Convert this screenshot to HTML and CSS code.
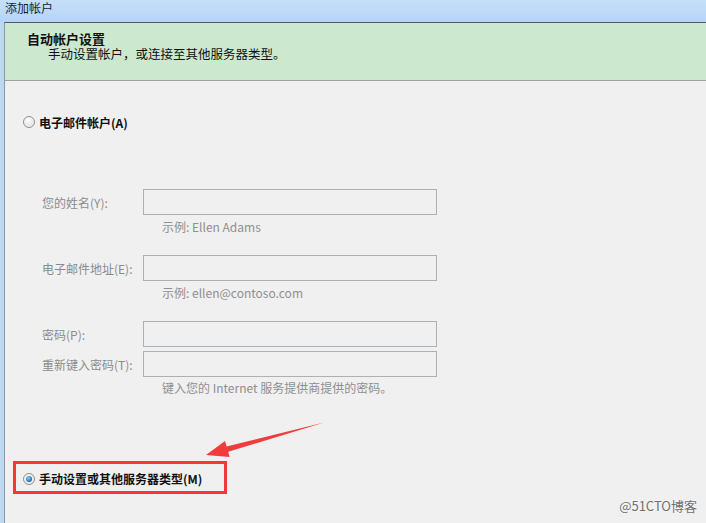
FILE: index.html
```html
<!DOCTYPE html>
<html lang="zh-CN">
<head>
    <meta charset="UTF-8">
    <title>添加帐户</title>
    <link rel="stylesheet" href="styles.css">
</head>
<body>
    <div class="window">
        <div class="titlebar">添加帐户</div>
        <div class="frame">
            <div class="panel">
                <div class="header">
                    <div class="header-title">自动帐户设置</div>
                    <div class="header-sub">手动设置帐户，或连接至其他服务器类型。</div>
                </div>
                <div class="content">
                    <div class="option"><span class="radio"></span>电子邮件帐户(A)</div>

                    <div class="form">
                        <div class="field"><span class="label">您的姓名(Y):</span><span class="input"></span></div>
                        <div class="hint">示例: Ellen Adams</div>
                        <div class="field gap"><span class="label">电子邮件地址(E):</span><span class="input"></span></div>
                        <div class="hint">示例: ellen@contoso.com</div>
                        <div class="field gap"><span class="label">密码(P):</span><span class="input"></span></div>
                        <div class="field tight"><span class="label">重新键入密码(T):</span><span class="input"></span></div>
                        <div class="hint note">键入您的 Internet 服务提供商提供的密码。</div>
                    </div>

                    <div class="option marked"><span class="radio checked"></span>手动设置或其他服务器类型(M)</div>
                </div>
            </div>
        </div>

        <!-- annotation arrow -->
        <svg class="arrow" width="706" height="523" viewBox="0 0 706 523">
            <polygon points="206,455 225,441 226.6,446.6 324,422.6 228.2,451.8 229.6,457" fill="#f23b3b"/>
        </svg>
        <div class="watermark">@51CTO博客</div>
    </div>
</body>
</html>
```

FILE: styles.css
```css
body {
    margin: 0;
    font-family: "Noto Sans CJK SC", "Liberation Sans", sans-serif;
    font-size: 12px;
}

.window {
    position: relative;
    width: 706px;
    height: 523px;
    overflow: hidden;
    background-color: #bcd8f3;
}

.titlebar {
    height: 22px;
    line-height: 16px;
    padding-left: 5px;
    box-sizing: border-box;
    color: #1c1c1c;
    background: linear-gradient(#c6e0fa, #b4d5f7);
}

.frame {
    padding-left: 4px;
    height: 501px;
    background-color: #bdd8f1;
}

.panel {
    height: 100%;
    border-top: 1px solid #4f5b69;
    border-left: 1px solid #8d98a4;
    background-color: #f0f0f0;
}

.header {
    height: 58px;
    padding: 9px 0 0 22px;
    box-sizing: border-box;
    background-color: #cce8cf;
    border-bottom: 1px solid #9ea39e;
}

.header-title {
    font-size: 13px;
    font-weight: bold;
    line-height: 14px;
    color: #111;
}

.header-sub {
    margin: 1px 0 0 21px;
    font-size: 12.5px;
    line-height: 13px;
    color: #111;
}

.content {
    padding: 33px 0 0 18px;
}

.option {
    display: flex;
    align-items: center;
    height: 16px;
    font-weight: bold;
    color: #111;
}

.radio {
    width: 10px;
    height: 10px;
    margin-right: 4px;
    border: 1px solid #8e8f8f;
    border-radius: 50%;
    background: radial-gradient(circle at 40% 35%, #ffffff, #d4d4d4);
    box-shadow: inset 0 0 0 1px #f4f4f4;
    position: relative;
}

.radio.checked::after {
    content: "";
    position: absolute;
    left: 2px;
    top: 2px;
    width: 6px;
    height: 6px;
    border-radius: 50%;
    background: radial-gradient(circle at 40% 35%, #8fd0f6, #1f6aa8 70%, #174f80);
}

.form {
    margin: 59px 0 0 19px;
}

.field {
    display: grid;
    grid-template-columns: 101px 294px;
    align-items: center;
    height: 26px;
}

.field.gap {
    margin-top: 20px;
}

.field.tight {
    margin-top: 4px;
}

.label {
    color: #8b8b8b;
}

.input {
    height: 26px;
    box-sizing: border-box;
    border: 1px solid #adb1b4;
    background-color: #f0f0f0;
}

.hint {
    margin: 4px 0 0 120px;
    line-height: 16px;
    color: #8f8f8f;
}

.hint.note {
    margin-top: 3px;
}

.marked {
    width: 201px;
    height: 25px;
    margin: 65px 0 0 -10px;
    padding: 2px 0 0 7px;
    border: 3px solid #f03a3a;
}

.arrow {
    position: absolute;
    left: 0;
    top: 0;
    pointer-events: none;
}

.watermark {
    position: absolute;
    right: 9px;
    bottom: 8px;
    font-size: 13px;
    color: #707070;
    text-shadow: 0 0 2px #fff;
}
```
